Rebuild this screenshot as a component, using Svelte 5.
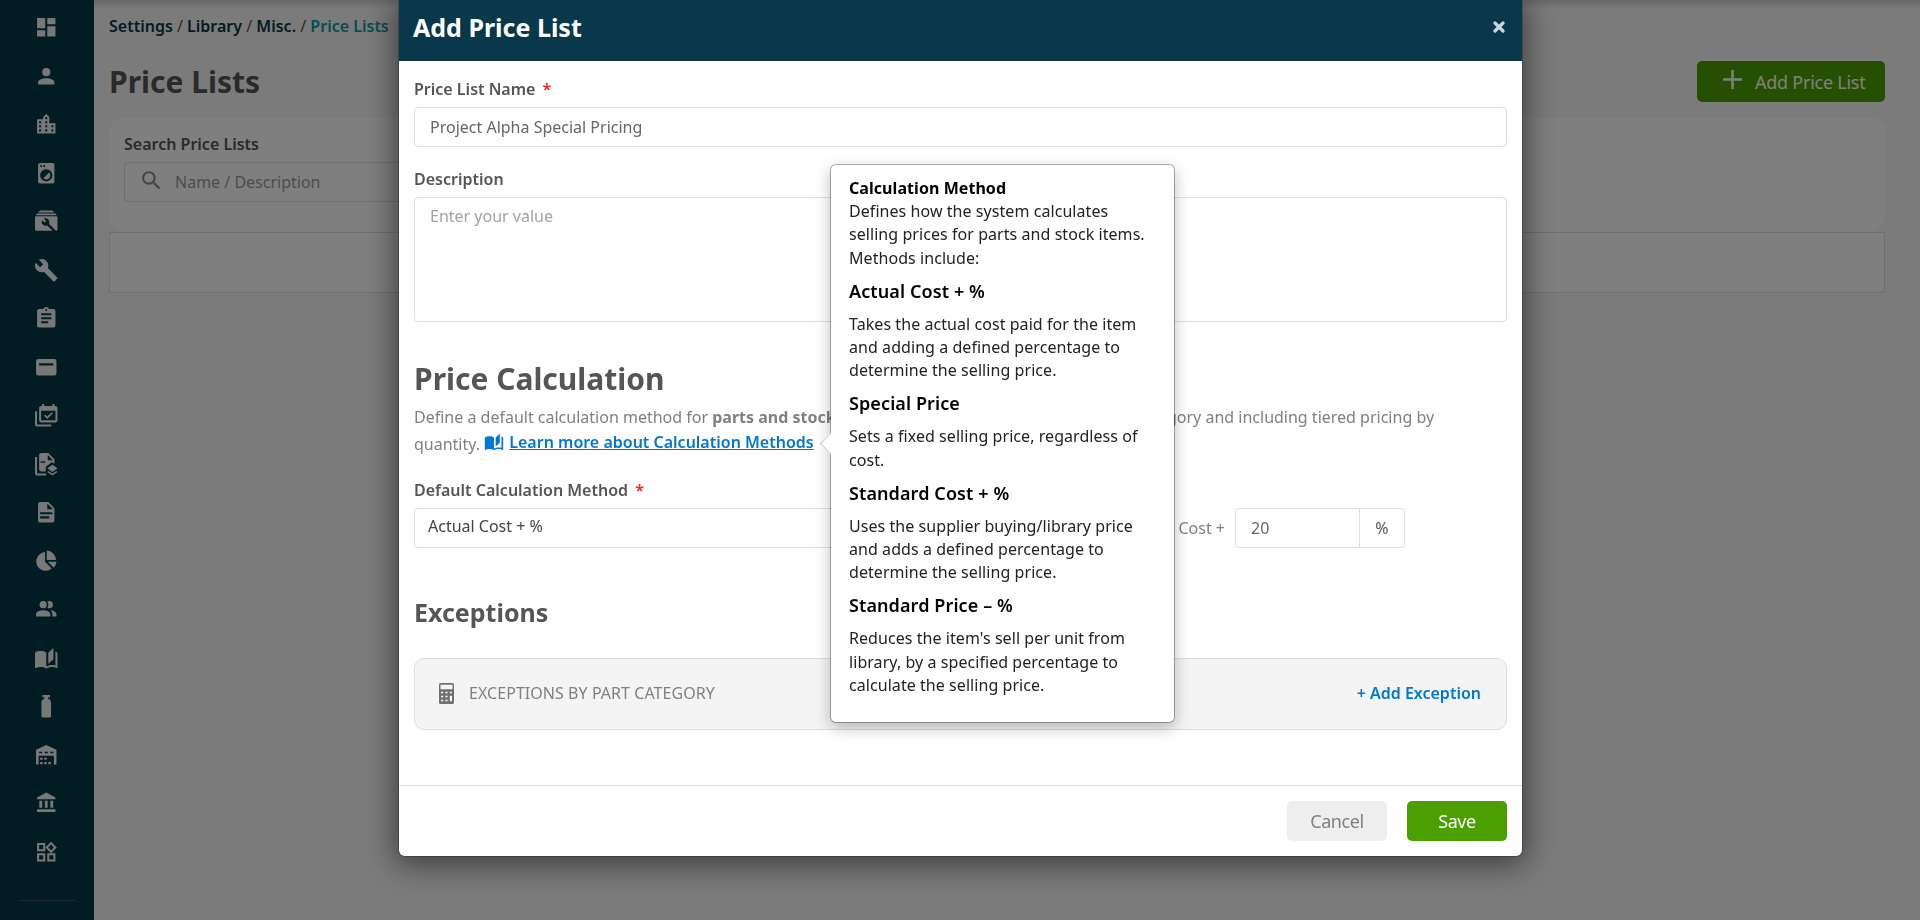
<script lang="ts">
  interface NavItem {
    name: string;
    path: string;
  }

  interface Method {
    title: string;
    text: string;
  }

  const book =
    'M19 2L14 6.5V17.5L19 13V2M6.5 5C4.55 5 2.45 5.4 1 6.5V21.16C1 21.41 1.25 21.66 1.5 21.66C1.6 21.66 1.65 21.59 1.75 21.59C3.1 20.94 5.05 20.5 6.5 20.5C8.45 20.5 10.55 20.9 12 22C13.35 21.15 15.8 20.5 17.5 20.5C19.15 20.5 20.85 20.81 22.25 21.56C22.35 21.61 22.4 21.59 22.5 21.59C22.75 21.59 23 21.34 23 21.09V6.5C22.4 6.05 21.75 5.75 21 5.5V19C19.9 18.65 18.7 18.5 17.5 18.5C15.8 18.5 13.35 19.15 12 20V6.5C10.55 5.4 8.45 5 6.5 5Z';

  const nav: NavItem[] = [
    { name: 'Dashboard', path: 'M13 3V9H21V3M13 21H21V11H13M3 21H11V15H3M3 13H11V3H3Z' },
    { name: 'People', path: 'M12 4A4 4 0 0 1 12 12A4 4 0 0 1 12 4M12 14C16.42 14 20 15.79 20 18V20H4V18C4 15.79 7.58 14 12 14Z' },
    { name: 'Sites', path: 'M19 15H17V13H19M19 19H17V17H19M13 7H11V5H13M13 11H11V9H13M13 15H11V13H13M13 19H11V17H13M7 11H5V9H7M7 15H5V13H7M7 19H5V17H7M15 11V5L12 2L9 5V7H3V21H21V11H15Z' },
    { name: 'Assets', path: 'M14.83 11.17C16.39 12.73 16.39 15.26 14.83 16.83C13.27 18.39 10.73 18.39 9.17 16.83L14.83 11.17M6 2H18A2 2 0 0 1 20 4V20A2 2 0 0 1 18 22H6A2 2 0 0 1 4 20V4A2 2 0 0 1 6 2M7 4A1 1 0 0 0 7 6A1 1 0 0 0 7 4M10 4A1 1 0 0 0 10 6A1 1 0 0 0 10 4M12 8A6 6 0 0 0 12 20A6 6 0 0 0 12 8Z' },
    { name: 'Service', path: 'M6 1.5H18L20 3.4H4ZM3 4.4H21L22.3 6H1.7ZM2 7H22A1 1 0 0 1 23 8V20A1.5 1.5 0 0 1 21.6 21.4L14.8 14.6C15.4 13 15 11.3 13.8 10.1C12.6 8.9 10.9 8.7 9.5 9.2L12 11.7L10.4 13.3L7.9 10.9C7.2 12.3 7.5 14.1 8.7 15.2C9.8 16.4 11.5 16.7 12.9 16.2L18.1 21.4H2.5A1.5 1.5 0 0 1 1 20V8A1 1 0 0 1 2 7Z' },
    { name: 'Jobs', path: 'M22.7 19L13.6 9.9C14.5 7.6 14 4.9 12.1 3C10.1 1 7.1 .6 4.7 1.7L9 6L6 9L1.6 4.7C.4 7.1 .9 10.1 2.9 12.1C4.8 14 7.5 14.5 9.8 13.6L18.9 22.7C19.3 23.1 19.9 23.1 20.3 22.7L22.6 20.4C23.1 20 23.1 19.3 22.7 19Z' },
    { name: 'Tasks', path: 'M17 9H7V7H17M17 13H7V11H17M14 17H7V15H14M12 3A1 1 0 0 1 12 5A1 1 0 0 1 12 3M19 3H14.82C14.4 1.84 13.3 1 12 1C10.7 1 9.6 1.84 9.18 3H5A2 2 0 0 0 3 5V19A2 2 0 0 0 5 21H19A2 2 0 0 0 21 19V5A2 2 0 0 0 19 3Z' },
    { name: 'Quotes', path: 'M4 4H20A2 2 0 0 1 22 6V18A2 2 0 0 1 20 20H4A2 2 0 0 1 2 18V6A2 2 0 0 1 4 4M5 8V10.3H19V8Z' },
    { name: 'Planner', path: 'M8 1H10V3H18V1H20V3H21A2 2 0 0 1 23 5V17A2 2 0 0 1 21 19H7A2 2 0 0 1 5 17V5A2 2 0 0 1 7 3H8ZM7 7.5V17H21V7.5ZM17.2 9L18.4 10.2L13 15.6L9.8 12.4L11 11.2L13 13.2ZM1 8H3V21H17V23H3A2 2 0 0 1 1 21Z' },
    { name: 'Contracts', path: 'M7 1H14L20 7V11.5L17.5 10L11.5 14.5V19H7A2 2 0 0 1 5 17V3A2 2 0 0 1 7 1M13.5 3V8H18.5ZM6.5 9V10.5H11V9ZM1 5H3V21H12V23H3A2 2 0 0 1 1 21ZM18 12.5L23 16L18 19.5L13 16ZM14.2 18.6L18 21.3L21.8 18.6L23 19.5L18 23L13 19.5Z' },
    { name: 'Documents', path: 'M13 9H18.5L13 3.5V9M6 2H14L20 8V20A2 2 0 0 1 18 22H6A2 2 0 0 1 4 20V4A2 2 0 0 1 6 2M15 18V16H6V18H15M18 14V12H6V14H18Z' },
    { name: 'Reports', path: 'M10.8 3V12.6L17.4 19.2A9.2 9.2 0 1 1 10.8 3M12.5 1.5A9.5 9.5 0 0 1 21.5 10.8H12.5ZM13.5 12.6H22A8.8 8.8 0 0 1 19.4 18.4Z' },
    { name: 'Teams', path: 'M16 17V19H2V17S2 13 9 13 16 17 16 17M12.5 7.5A3.5 3.5 0 1 0 9 11A3.5 3.5 0 0 0 12.5 7.5M15.94 13A5.32 5.32 0 0 1 18 17V19H22V17S22 13.37 15.94 13M15 4A3.39 3.39 0 0 0 13.07 4.59A5 5 0 0 1 13.07 10.41A3.39 3.39 0 0 0 15 11A3.5 3.5 0 0 0 15 4Z' },
    { name: 'Library', path: book },
    { name: 'Refrigerant', path: 'M8.3 1H15.7V3.3H13.8V4.6C15.6 5 16.7 6.2 16.7 8V21.5A1.5 1.5 0 0 1 15.2 23H8.8A1.5 1.5 0 0 1 7.3 21.5V8C7.3 6.2 8.4 5 10.2 4.6V3.3H8.3Z' },
    { name: 'Stock', path: 'M12 2L22 6.5V21H19.5V12.5H4.5V21H2V6.5ZM5 8.5V10H8V8.5ZM10.5 8.5V10H13.5V8.5ZM16 8.5V10H19V8.5ZM6 14.5H8.5V16.5H6ZM10 14.5H12.5V16.5H10ZM6 18.5H8.5V20.8H6ZM10 18.5H12.5V20.8H10ZM14 18.5H16.5V20.8H14Z' },
    { name: 'Accounts', path: 'M12 1.5L3 6.3V8H21V6.3M16 9.5V16.5H18.8V9.5M3 20.5H21V17.9H3M10.6 9.5V16.5H13.4V9.5M5.2 9.5V16.5H8V9.5H5.2Z' },
    { name: 'Apps', path: 'M3 3H11V11H3ZM5 5V9H9V5ZM3 13H11V21H3ZM5 15V19H9V15ZM13 13H21V21H13ZM15 15V19H19V15ZM16.7 1.7L22.3 7.3L16.7 12.9L11.1 7.3ZM16.7 4.5L13.9 7.3L16.7 10.1L19.5 7.3Z' },
  ];

  const methods: Method[] = [
    {
      title: 'Actual Cost + %',
      text: 'Takes the actual cost paid for the item and adding a defined percentage to determine the selling price.',
    },
    { title: 'Special Price', text: 'Sets a fixed selling price, regardless of cost.' },
    {
      title: 'Standard Cost + %',
      text: 'Uses the supplier buying/library price and adds a defined percentage to determine the selling price.',
    },
    {
      title: 'Standard Price – %',
      text: "Reduces the item's sell per unit from library, by a specified percentage to calculate the selling price.",
    },
  ];

  let name = $state('Project Alpha Special Pricing');
  let description = $state('');
  let percent = $state('20');
</script>

<div class="app">
  <nav class="sidebar">
    {#each nav as item (item.name)}
      <a class="nav-item" href="#top" aria-label={item.name}>
        <svg viewBox="0 0 24 24"><path fill-rule="evenodd" d={item.path} /></svg>
      </a>
    {/each}
    <div class="nav-divider"></div>
  </nav>

  <main class="page">
    <div class="crumbs">
      <b>Settings</b> / <b>Library</b> / <b>Misc.</b> / <b class="current">Price Lists</b>
    </div>
    <div class="page-head">
      <h1>Price Lists</h1>
      <button class="add">
        <svg viewBox="0 0 18 18"><path d="M7.8 0h2.4v7.8H18v2.4h-7.8V18H7.8v-7.8H0V7.8h7.8z" /></svg>
        Add Price List
      </button>
    </div>
    <div class="search-card">
      <span class="search-label">Search Price Lists</span>
      <div class="search">
        <svg viewBox="0 0 24 24"><path d="M9.5 3A6.5 6.5 0 0 1 16 9.5C16 11.11 15.41 12.59 14.44 13.73L14.71 14H15.5L20.5 19L19 20.5L14 15.5V14.71L13.73 14.44C12.59 15.41 11.11 16 9.5 16A6.5 6.5 0 0 1 9.5 3M9.5 5C7 5 5 7 5 9.5C5 12 7 14 9.5 14C12 14 14 12 14 9.5C14 7 12 5 9.5 5Z" /></svg>
        <span>Name / Description</span>
      </div>
    </div>
    <div class="table"></div>
  </main>
</div>

<div class="overlay">
  <div class="modal" role="dialog" aria-label="Add Price List">
    <header>
      <h2>Add Price List</h2>
      <button class="close" aria-label="Close">
        <svg viewBox="0 0 12 12"><path d="M2 2L10 10M10 2L2 10" /></svg>
      </button>
    </header>

    <div class="body">
      <label for="name">Price List Name <i>*</i></label>
      <input id="name" class="control" bind:value={name} />

      <label for="description" class="spaced">Description</label>
      <textarea id="description" class="control" placeholder="Enter your value" bind:value={description}></textarea>

      <h3 class="section">Price Calculation</h3>
      <p class="intro">
        Define a default calculation method for <b>parts and stock items</b>, adding exceptions for each part category and including tiered pricing by<br />
        quantity.
        <a class="learn" href="#methods"><svg viewBox="0 0 24 24"><path d={book} /></svg><span>Learn more about Calculation Methods</span></a>
      </p>

      <label for="method">Default Calculation Method <i>*</i></label>
      <div class="method-row">
        <div id="method" class="control select">Actual Cost + %</div>
        <span class="prefix">Cost +</span>
        <div class="percent">
          <input aria-label="Percentage" bind:value={percent} />
          <span>%</span>
        </div>
      </div>

      <h3 class="sub">Exceptions</h3>
      <div class="exceptions">
        <svg viewBox="0 0 15 21"><path fill-rule="evenodd" d="M1.5 0H13.5A1.5 1.5 0 0 1 15 1.5V19.5A1.5 1.5 0 0 1 13.5 21H1.5A1.5 1.5 0 0 1 0 19.5V1.5A1.5 1.5 0 0 1 1.5 0M1.5 1.8V6.3H13.5V1.8ZM2 8.7V10.3H4.2V8.7ZM6.4 8.7V10.3H8.6V8.7ZM10.8 8.7V10.3H13V8.7ZM2 12.7V14.3H4.2V12.7ZM6.4 12.7V14.3H8.6V12.7ZM10.8 12.7V18.3H13V12.7ZM2 16.7V18.3H4.2V16.7ZM6.4 16.7V18.3H8.6V16.7Z" /></svg>
        <span>EXCEPTIONS BY PART CATEGORY</span>
        <button class="add-exception">+ Add Exception</button>
      </div>
    </div>

    <footer>
      <button class="cancel">Cancel</button>
      <button class="save">Save</button>
    </footer>

    <div class="popover" role="tooltip">
      <strong>Calculation Method</strong>
      <p>Defines how the system calculates selling prices for parts and stock items. Methods include:</p>
      {#each methods as method (method.title)}
        <h4>{method.title}</h4>
        <p>{method.text}</p>
      {/each}
    </div>
  </div>
</div>

<style>
  :global(body) {
    overflow: hidden;
    font-family: 'Noto Sans', 'Open Sans', sans-serif;
    font-size: 16px;
    color: #555;
  }
  :global(*) { box-sizing: border-box; }
  svg { display: block; fill: currentColor; }
  button {
    border: 0;
    font: inherit;
    cursor: pointer;
  }
  h1, h2, h3, h4, p { margin: 0; }
  .app {
    display: flex;
    height: 920px;
    background: #f7f7f7;
  }
  .sidebar {
    width: 94px;
    flex-shrink: 0;
    padding-top: 3px;
    background: #053947;
  }
  .nav-item {
    display: flex;
    align-items: center;
    justify-content: center;
    height: 48.5px;
    padding-right: 1px;
    color: #f0f0f0;
  }
  .nav-item svg { width: 24.5px; height: 24.5px; }
  .nav-divider {
    margin: 24px 19px 0;
    border-top: 1px solid #3c5563;
  }
  .page {
    flex: 1;
    padding: 12px 35px 0 15px;
    background: linear-gradient(rgba(0, 0, 0, 0.16), transparent 9px);
  }
  .crumbs {
    line-height: 28px;
    color: #555;
  }
  .crumbs b { font-weight: 600; color: #063746; }
  .crumbs .current { color: #0e9ba5; }
  .page-head {
    display: flex;
    justify-content: space-between;
    margin-top: 21px;
    height: 56px;
  }
  h1 {
    font-size: 30px;
    line-height: 41px;
    color: #555;
  }
  .add {
    display: flex;
    align-items: center;
    gap: 13px;
    width: 188px;
    height: 41px;
    padding: 0 0 0 26px;
    border-radius: 5px;
    font-size: 18px;
    letter-spacing: -0.25px;
    background: #4ba000;
    color: #fff;
  }
  .add svg { width: 19px; height: 19px; margin-top: -4px; }
  .search-card {
    height: 115px;
    padding: 14px 15px 0;
    border-radius: 16px;
    background: #fff;
  }
  .search-label {
    display: block;
    line-height: 26px;
    font-weight: 600;
  }
  .search {
    display: flex;
    align-items: center;
    gap: 11px;
    width: 420px;
    height: 40px;
    margin-top: 5px;
    padding-left: 14px;
    border: 1px solid #dedede;
    border-radius: 4px;
    color: #999;
  }
  .search svg { width: 25px; height: 25px; margin-top: -4px; color: #888; }
  .table {
    height: 61px;
    border: 1px solid #dedede;
    background: #fff;
  }
  .overlay {
    position: fixed;
    inset: 0;
    background: rgba(0, 0, 0, 0.5);
  }
  .modal {
    position: relative;
    width: 1123px;
    height: 856px;
    margin-left: 399px;
    display: flex;
    flex-direction: column;
    border-radius: 0 0 6px 6px;
    background: #fff;
    box-shadow: 0 0 0 1px rgba(0, 0, 0, 0.2), 0 5px 30px 4px rgba(0, 0, 0, 0.5);
  }
  header {
    display: flex;
    justify-content: space-between;
    height: 61px;
    padding: 12px 17px 0 14px;
    background: #083849;
    color: #fff;
  }
  h2 { font-size: 25px; line-height: 30px; }
  .close {
    width: 12px;
    height: 30px;
    padding: 0;
    background: none;
    color: #ccd5da;
  }
  .close svg { width: 12px; height: 12px; stroke: currentColor; stroke-width: 3.2; stroke-linecap: round; }
  .body { flex: 1; padding: 15px; }
  label {
    display: block;
    margin-bottom: 5px;
    line-height: 26px;
    font-weight: 600;
  }
  label i {
    margin-left: 3px;
    font-style: normal;
    color: #f22;
  }
  .spaced { margin-top: 19px; }
  .control {
    display: block;
    width: 100%;
    height: 40px;
    padding: 0 15px 1px;
    border: 1px solid #dedede;
    border-radius: 4px;
    outline: 0;
    background: #fff;
    font: inherit;
    color: #666;
  }
  textarea.control {
    height: 125px;
    padding-top: 7px;
    resize: none;
  }
  textarea::placeholder { color: #a2a2a2; }
  .section {
    margin-top: 37px;
    font-size: 30px;
    line-height: 39px;
  }
  .intro {
    height: 54px;
    margin: 6px 0 19px;
    line-height: 27px;
    color: #808080;
  }
  .learn {
    font-weight: 600;
    color: #0078cf;
    text-decoration: none;
  }
  .learn svg {
    display: inline-block;
    width: 20px;
    height: 20px;
    margin-right: 5px;
    vertical-align: -2px;
  }
  .learn span {
    line-height: 20px;
    vertical-align: 2px;
    text-decoration: underline;
  }
  .method-row {
    display: flex;
    align-items: center;
  }
  .select {
    width: 690px;
    padding: 0 13px;
    line-height: 35px;
    color: #444;
  }
  .prefix {
    width: 131px;
    padding-right: 10px;
    text-align: right;
    color: #808080;
  }
  .percent {
    display: flex;
    width: 170px;
    height: 40px;
    border: 1px solid #dedede;
    border-radius: 4px;
  }
  .percent input {
    width: 124px;
    padding: 0 15px;
    border: 0;
    border-right: 1px solid #dedede;
    outline: 0;
    background: none;
    font: inherit;
    color: #666;
  }
  .percent span { flex: 1; line-height: 39px; text-align: center; }
  .sub {
    margin-top: 49px;
    font-size: 25px;
    line-height: 31px;
  }
  .exceptions {
    display: flex;
    align-items: center;
    height: 72px;
    margin-top: 30px;
    padding: 0 25px 2px 24px;
    border: 1px solid #dedede;
    border-radius: 10px;
    background: #f4f4f4;
    color: #808080;
  }
  .exceptions svg {
    width: 15px;
    height: 21px;
    margin-right: 15px;
    color: #707070;
  }
  .exceptions span { letter-spacing: 0.05px; }
  .add-exception {
    margin-left: auto;
    padding: 0;
    background: none;
    font-weight: 600;
    color: #0078cf;
  }
  footer {
    display: flex;
    justify-content: flex-end;
    gap: 20px;
    height: 71px;
    padding: 15px;
    border-top: 1px solid #dedede;
  }
  footer button {
    width: 100px;
    height: 40px;
    padding-bottom: 2px;
    border-radius: 5px;
    font-size: 18px;
    letter-spacing: -0.4px;
  }
  .cancel { background: #eee; color: #808080; }
  .save { background: #4ba000; color: #fff; }
  .popover {
    position: absolute;
    top: 164px;
    left: 431px;
    width: 345px;
    height: 559px;
    padding: 12px 18px;
    border: 1px solid rgba(0, 0, 0, 0.3);
    background-clip: padding-box;
    border-radius: 6px;
    background-color: #fff;
    box-shadow: 0 5px 15px rgba(0, 0, 0, 0.25);
    line-height: 23.2px;
    letter-spacing: 0.06px;
    color: #222;
  }
  .popover::before {
    content: '';
    position: absolute;
    top: 271px;
    left: -8px;
    width: 14px;
    height: 14px;
    border-left: 1px solid #ccc;
    border-bottom: 1px solid #ccc;
    background: #fff;
    transform: rotate(45deg);
  }
  .popover strong {
    display: block;
    font-weight: 700;
    color: #000;
  }
  h4 {
    margin: 10px 0;
    font-size: 18px;
    line-height: 23px;
    font-weight: 600;
    letter-spacing: 0.1px;
    color: #000;
  }
</style>
